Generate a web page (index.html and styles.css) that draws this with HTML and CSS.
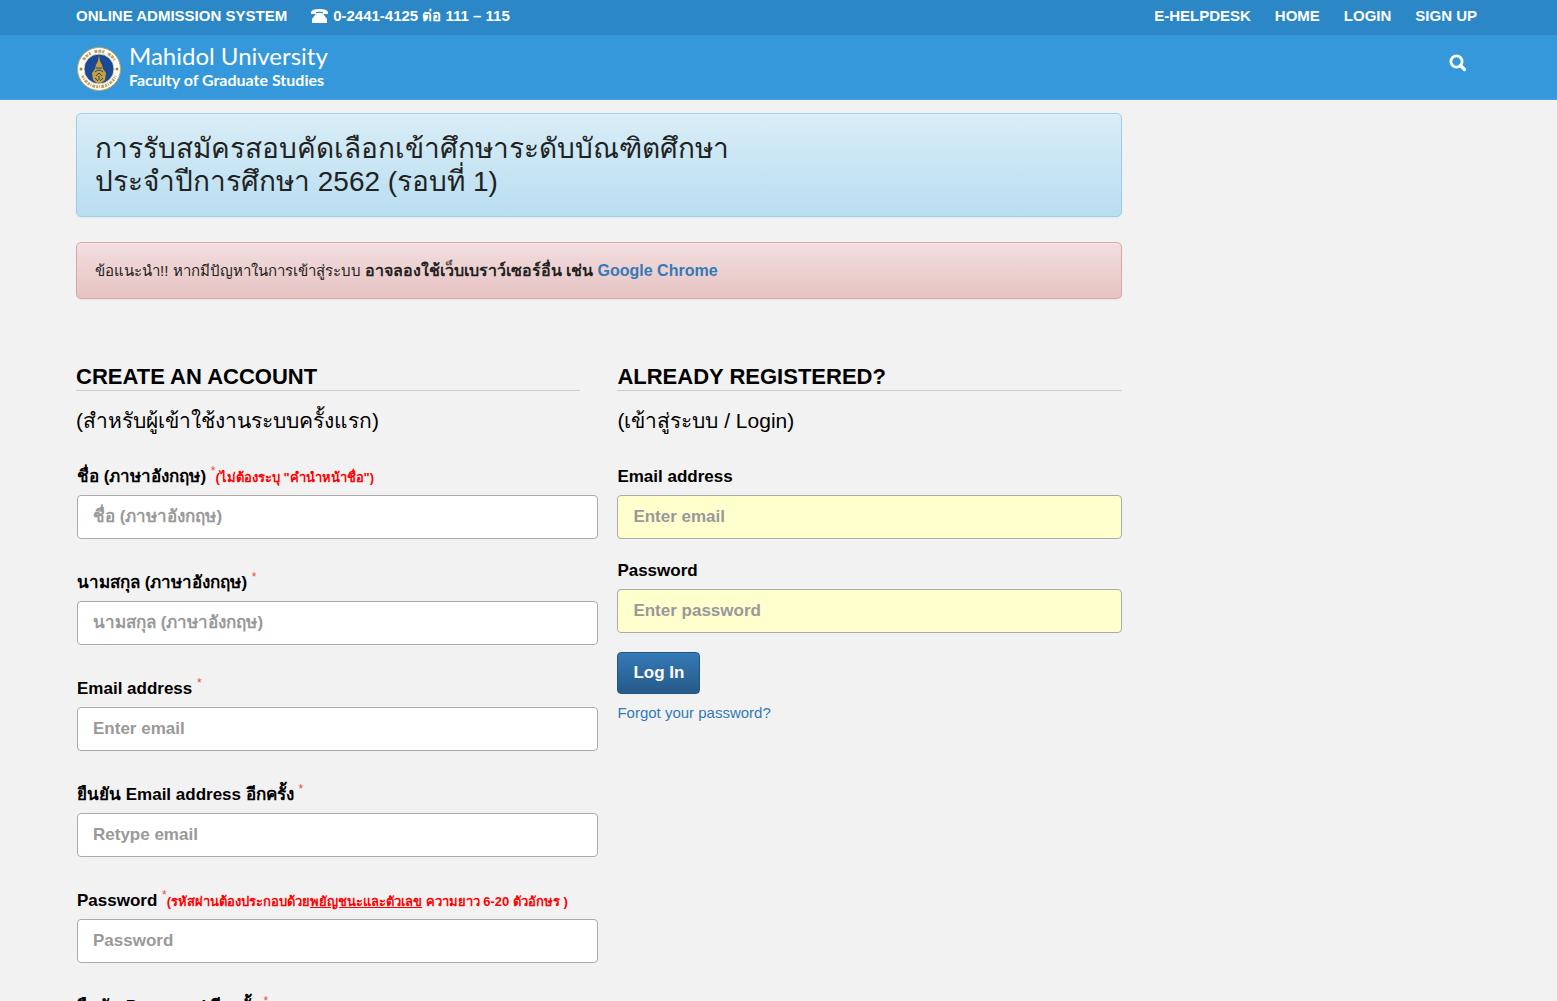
FILE: index.html
```html
<!DOCTYPE html>
<html lang="th">
<head>
<meta charset="utf-8">
<meta name="viewport" content="width=device-width, initial-scale=1">
<title>Online Admission System</title>
<link rel="stylesheet" href="styles.css">
</head>
<body>
<header>
  <div class="topbar">
    <div class="container topbar-row">
      <div class="topbar-info">
        <span>ONLINE ADMISSION SYSTEM</span>
        <span class="phone">
          <svg class="phone-icon" viewBox="0 0 17 14" aria-hidden="true"><path fill="#fff" d="M0 5V3Q1 0 8.500 0T17 3V5H12V3Q8.500 2.300 5 3V5Z"/><path fill="#fff" d="M5.500 4H11.500L16 10V14H1V10Z"/></svg>
          <span>0-2441-4125 ต่อ 111 – 115</span>
        </span>
      </div>
      <nav class="topbar-nav">
        <a href="#">E-HELPDESK</a>
        <a href="#">HOME</a>
        <a href="#">LOGIN</a>
        <a href="#">SIGN UP</a>
      </nav>
    </div>
  </div>
  <div class="brandbar">
    <div class="container brand-row">
      <a class="brand" href="#">
        <svg class="seal" viewBox="0 0 44 44" aria-hidden="true">
          <circle cx="22" cy="22" r="21.500" fill="#fff" stroke="#b9a467"/>
          <path fill="none" stroke="#b08d3c" stroke-width="3" stroke-dasharray="2 1 1 1 3 1" opacity=".8" d="M5.500 29A18 18 0 0 0 38.500 29"/>
          <path fill="none" stroke="#b08d3c" stroke-width="3" stroke-dasharray="3 1 3 1 2 4" opacity=".8" d="M6.500 13A18 18 0 0 1 37.500 13"/>
          <circle cx="22" cy="22" r="15" fill="#1b4a94" stroke="#d8d5c4"/>
          <circle cx="4" cy="22" r="1.500" fill="#b07f20"/><circle cx="40" cy="22" r="1.500" fill="#b07f20"/>
          <path fill="#c9a037" d="M22 8L23 14L25 18L26 22L29 26L28 33L24 36H20L16 33L15 26L18 22L19 18L21 14Z"/>
          <path fill="none" stroke="#1b4a94" d="M19 21H25M18 25Q22 21 26 25M19 29L22 26L25 29M18 31L21 34M26 31L23 34M22 29V33"/>
        </svg>
        <span class="brand-text">
          <span class="brand-name">Mahidol University</span>
          <span class="brand-sub">Faculty of Graduate Studies</span>
        </span>
      </a>
      <button class="search" type="button" aria-label="Search">
        <svg viewBox="0 0 18 18" aria-hidden="true"><circle cx="7.500" cy="7.500" r="5.600" fill="none" stroke="#fff" stroke-width="2.800"/><path d="M11.500 11.500L15.500 15.500" stroke="#fff" stroke-width="3.200" stroke-linecap="round"/></svg>
      </button>
    </div>
  </div>
</header>
<div class="container page">
  <main>
    <div class="alert alert-info">
      <h1>การรับสมัครสอบคัดเลือกเข้าศึกษาระดับบัณฑิตศึกษา<br>ประจำปีการศึกษา 2562 (รอบที่ 1)</h1>
    </div>
    <div class="alert alert-danger">
      <p>ข้อแนะนำ!! หากมีปัญหาในการเข้าสู่ระบบ <strong>อาจลองใช้เว็บเบราว์เซอร์อื่น เช่น <a href="#">Google Chrome</a></strong></p>
    </div>
    <div class="forms">
      <section>
        <h2>CREATE AN ACCOUNT</h2>
        <p class="subtitle">(สำหรับผู้เข้าใช้งานระบบครั้งแรก)</p>
        <form class="signup">
          <div class="field">
            <label for="firstname">ชื่อ (ภาษาอังกฤษ) <sup>*</sup><small>(ไม่ต้องระบุ "คำนำหน้าชื่อ")</small></label>
            <input id="firstname" type="text" placeholder="ชื่อ (ภาษาอังกฤษ)">
          </div>
          <div class="field">
            <label for="lastname">นามสกุล (ภาษาอังกฤษ) <sup>*</sup></label>
            <input id="lastname" type="text" placeholder="นามสกุล (ภาษาอังกฤษ)">
          </div>
          <div class="field">
            <label for="email">Email address <sup>*</sup></label>
            <input id="email" type="email" placeholder="Enter email">
          </div>
          <div class="field">
            <label for="email2">ยืนยัน Email address อีกครั้ง <sup>*</sup></label>
            <input id="email2" type="email" placeholder="Retype email">
          </div>
          <div class="field">
            <label for="password">Password <sup>*</sup><small>(รหัสผ่านต้องประกอบด้วย<u>พยัญชนะและตัวเลข</u> ความยาว 6-20 ตัวอักษร )</small></label>
            <input id="password" type="password" placeholder="Password">
          </div>
          <div class="field">
            <label for="password2">ยืนยัน Password อีกครั้ง <sup>*</sup></label>
            <input id="password2" type="password" placeholder="Retype password">
          </div>
        </form>
      </section>
      <section>
        <h2>ALREADY REGISTERED?</h2>
        <p class="subtitle">(เข้าสู่ระบบ / Login)</p>
        <form class="login">
          <div class="field">
            <label for="login-email">Email address</label>
            <input id="login-email" type="email" placeholder="Enter email">
          </div>
          <div class="field">
            <label for="login-password">Password</label>
            <input id="login-password" type="password" placeholder="Enter password">
          </div>
          <button class="btn" type="submit">Log In</button>
          <a class="forgot" href="#">Forgot your password?</a>
        </form>
      </section>
    </div>
  </main>
</div>
</body>
</html>
```
FILE: styles.css
```css
* { box-sizing: border-box; }
body {
  margin: 0;
  background: #f2f2f2;
  color: #000;
  font: 15px/24px "Liberation Sans", Arial, sans-serif;
}
a { color: #337ab7; text-decoration: none; }
h1, h2, p { margin: 0; font-weight: normal; }
.container { max-width: 1405px; margin: 0 auto; }

.topbar { background: #2b87c6; color: #fff; font-weight: bold; }
.topbar-row { display: flex; justify-content: space-between; padding: 4px 4px 7px 0; }
.topbar-info, .topbar-nav { display: flex; gap: 24px; }
.topbar-nav a { color: #fff; }
.phone { display: flex; align-items: center; gap: 5px; }
.phone-icon { width: 17px; height: 14px; }

.brandbar { background: #3498db; border-bottom: 1px solid #4aa3df; }
.brand-row { display: flex; justify-content: space-between; padding: 8px 14px 8px 0; }
.brand { display: flex; gap: 8px; align-items: flex-end; color: #fff; font-family: Lato, sans-serif; }
.seal { width: 44px; height: 44px; margin-left: 1px; }
.brand-text { display: flex; flex-direction: column; }
.brand-name { font-size: 24px; line-height: 26px; }
.brand-sub { font-size: 16px; line-height: 22px; font-weight: bold; }
.search { align-self: flex-start; margin-top: 11px; padding: 0; border: 0; background: none; }
.search svg { display: block; width: 18px; height: 18px; }

.page { display: grid; grid-template-columns: 3fr 1fr; padding-top: 13px; }
main { padding-right: 8px; }
.alert { padding: 18px; border: 1px solid; border-radius: 5px; margin-bottom: 25px; color: #222; box-shadow: 0 1px 2px rgba(0, 0, 0, .05), inset 0 1px 0 rgba(255, 255, 255, .25); }
.alert h1 { font-size: 28px; line-height: 33px; }
.alert-info { background: linear-gradient(#d9edf7, #b9def0); border-color: #9acfea; }
.alert-danger { background: linear-gradient(#f2dede, #e7c3c3); border-color: #dca7a7; }
.alert-danger p { line-height: 19px; }
.alert-danger strong { font-size: 16px; }

.forms { display: grid; grid-template-columns: 1fr 1fr; gap: 37px; padding-top: 39px; }
h2 { font-size: 22px; font-weight: bold; line-height: 27px; border-bottom: 1px solid #ccc; }
.subtitle { font-size: 21px; line-height: 30px; margin: 15px 0 29px; }
.field { display: flex; flex-direction: column; gap: 6px; }
label { font-size: 17px; font-weight: bold; line-height: 24px; white-space: nowrap; height: 24px; }
sup { color: #e74c3c; font-size: 12px; font-weight: normal; line-height: 0; }
small { color: red; font-size: 13px; }
input {
  height: 44px;
  padding: 0 15px;
  border: 1px solid #aaa;
  border-radius: 4px;
  background: #fff;
  font: bold 17px "Liberation Sans", Arial, sans-serif;
}
input::placeholder { color: #999; }
.signup { margin: 0 -18px 0 1px; }
.signup .field { margin-bottom: 32px; }
.login .field { margin-bottom: 20px; }
.login .field:last-of-type { margin-bottom: 19px; }
.login input { background: #ffffce; }
.btn {
  display: block;
  height: 42px;
  padding: 0 15px;
  border: 1px solid #245580;
  border-radius: 4px;
  background: linear-gradient(#337ab7, #265a88);
  color: #fff;
  font: bold 17px "Liberation Sans", Arial, sans-serif;
}
.forgot { display: block; margin-top: 7px; line-height: 24px; }
```
